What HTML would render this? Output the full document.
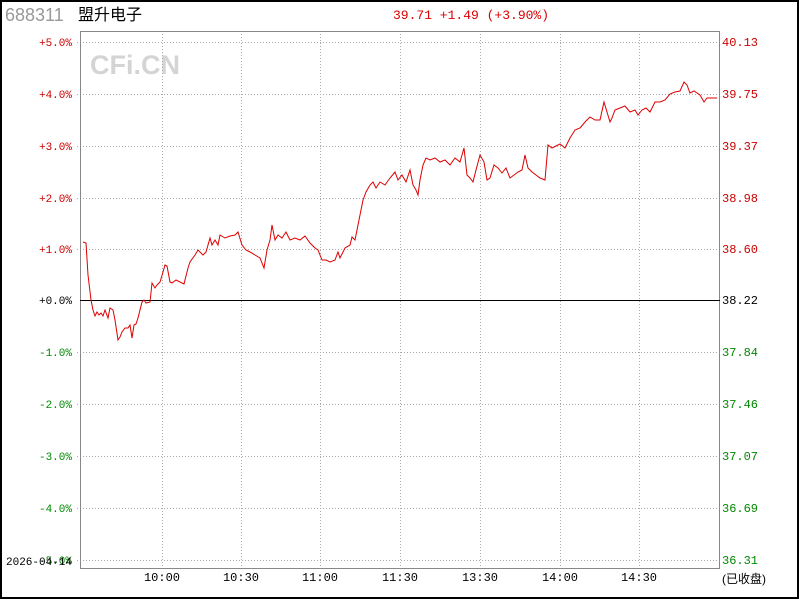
<!DOCTYPE html>
<html><head><meta charset="utf-8"><style>
body{margin:0;background:#fff;}
svg{display:block}
</style></head><body>
<svg width="800" height="600" xmlns="http://www.w3.org/2000/svg" font-family="'Liberation Mono','Noto Sans CJK SC',monospace">
<rect x="1" y="1" width="797" height="597" fill="#fff" stroke="#000" stroke-width="2"/>
<text x="5" y="21" font-family="'Liberation Sans',sans-serif" font-size="18" fill="#999">688311</text>
<text x="78" y="20" font-family="'Liberation Sans','Noto Sans CJK SC',sans-serif" font-size="16" fill="#000">盟升电子</text>
<text x="393" y="19" font-size="13" fill="#d00">39.71 +1.49 (+3.90%)</text>
<text x="90" y="74" font-family="'Liberation Sans',sans-serif" font-weight="900" font-size="27" fill="#d4d4d4">CFi.CN</text>
<g stroke="#aaa" stroke-dasharray="1,2" stroke-width="1">
<line x1="77" y1="42.5" x2="720" y2="42.5"/><line x1="77" y1="94.5" x2="720" y2="94.5"/><line x1="77" y1="146.5" x2="720" y2="146.5"/><line x1="77" y1="198.5" x2="720" y2="198.5"/><line x1="77" y1="249.5" x2="720" y2="249.5"/><line x1="77" y1="352.5" x2="720" y2="352.5"/><line x1="77" y1="404.5" x2="720" y2="404.5"/><line x1="77" y1="456.5" x2="720" y2="456.5"/><line x1="77" y1="508.5" x2="720" y2="508.5"/><line x1="77" y1="560.5" x2="720" y2="560.5"/>
<line x1="162.5" y1="31" x2="162.5" y2="569"/><line x1="241.5" y1="31" x2="241.5" y2="569"/><line x1="320.5" y1="31" x2="320.5" y2="569"/><line x1="400.5" y1="31" x2="400.5" y2="569"/><line x1="480.5" y1="31" x2="480.5" y2="569"/><line x1="560.5" y1="31" x2="560.5" y2="569"/><line x1="639.5" y1="31" x2="639.5" y2="569"/>
</g>
<rect x="80.5" y="31.5" width="639" height="537" fill="none" stroke="#888"/>
<line x1="80" y1="300.5" x2="720" y2="300.5" stroke="#000"/>
<g font-size="11" text-anchor="end">
<text x="72" y="46" fill="#c00">+5.0%</text><text x="72" y="98" fill="#c00">+4.0%</text><text x="72" y="150" fill="#c00">+3.0%</text><text x="72" y="202" fill="#c00">+2.0%</text><text x="72" y="253" fill="#c00">+1.0%</text><text x="72" y="304" fill="#000">+0.0%</text>
<text x="72" y="356" fill="#080">-1.0%</text><text x="72" y="408" fill="#080">-2.0%</text><text x="72" y="460" fill="#080">-3.0%</text><text x="72" y="512" fill="#080">-4.0%</text><text x="72" y="564" fill="#080">-5.0%</text>
</g>
<text x="6" y="565" font-size="11" fill="#000">2026-04-14</text>
<g font-size="12">
<text x="722" y="46" fill="#c00">40.13</text><text x="722" y="98" fill="#c00">39.75</text><text x="722" y="150" fill="#c00">39.37</text><text x="722" y="202" fill="#c00">38.98</text><text x="722" y="253" fill="#c00">38.60</text><text x="722" y="304" fill="#000">38.22</text>
<text x="722" y="356" fill="#080">37.84</text><text x="722" y="408" fill="#080">37.46</text><text x="722" y="460" fill="#080">37.07</text><text x="722" y="512" fill="#080">36.69</text><text x="722" y="564" fill="#080">36.31</text>
</g>
<g font-size="12" fill="#000" text-anchor="middle">
<text x="162" y="581">10:00</text><text x="241" y="581">10:30</text><text x="320" y="581">11:00</text><text x="400" y="581">11:30</text><text x="480" y="581">13:30</text><text x="560" y="581">14:00</text><text x="639" y="581">14:30</text>
</g>
<text x="722" y="583" font-family="'Liberation Sans','Noto Sans CJK SC',sans-serif" font-size="12" fill="#000">(已收盘)</text>
<polyline fill="none" stroke="#d00" stroke-width="1" points="83,242 86,243 88,275 91,300 93,310 95,316 97,312 99,315 101,313 103,316 105,310 108,318 110,308 113,310 115,320 118,340 120,337 122,332 125,328 128,328 130,325 132,338 134,325 136,324 138,318 140,310 142,302 144,300 146,303 150,302 152,283 155,288 157,285 160,282 163,272 165,265 167,266 170,282 172,283 176,280 180,282 184,284 188,268 190,262 195,255 198,250 203,255 206,252 208,245 210,238 212,245 215,240 218,245 220,235 225,238 230,236 235,235 238,232 242,245 246,250 250,252 255,255 260,258 264,268 267,250 270,240 272,225 275,240 278,235 282,238 286,232 290,240 295,238 300,240 305,236 310,243 315,248 318,250 322,260 326,260 330,262 335,260 338,252 340,258 345,248 350,245 352,237 355,240 358,225 360,215 363,200 366,192 370,185 373,182 376,188 380,182 385,185 390,178 395,172 398,180 402,175 406,182 410,170 413,185 416,190 418,195 420,180 423,165 426,158 430,160 435,158 440,162 445,160 450,165 455,158 460,162 464,148 467,175 470,178 473,182 476,170 480,155 484,162 487,180 490,178 494,165 498,168 502,173 506,168 510,178 514,175 518,172 522,170 525,155 528,168 532,172 536,175 540,178 545,180 548,145 552,148 556,146 560,144 565,148 570,138 575,130 580,128 585,122 590,117 595,120 600,120 604,102 607,112 610,122 612,118 615,110 620,108 625,106 630,112 635,110 638,115 642,110 646,108 650,112 655,102 660,102 665,100 670,94 675,92 680,91 684,82 687,85 690,93 694,91 697,93 700,95 704,102 707,98 711,98 717,98"/>
</svg>
</body></html>
